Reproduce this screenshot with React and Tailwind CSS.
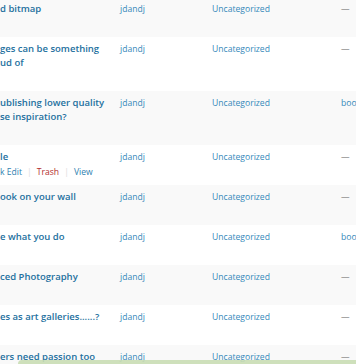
const rows = [
  { title: ['d bitmap'], tags: '—' },
  { title: ['ges can be something', 'ud of'], tags: '—' },
  { title: ['ublishing lower quality', 'se inspiration?'], tags: 'boo' },
  { title: ['le'], tags: '—', actions: true },
  { title: ['ook on your wall'], tags: '—' },
  { title: ['e what you do'], tags: 'boo' },
  { title: ['ced Photography'], tags: '—' },
  { title: ['es as art galleries......?'], tags: '—' },
  { title: ['ers need passion too'], tags: '—' },
];

function PostRow({ row, index }) {
  const striped = index % 2 === 0;
  return (
    <div className={`flex py-[5px] ${striped ? 'bg-[#f9f9f9]' : 'bg-white'}`}>
      <div className="w-[120px] shrink-0 pr-[10px]">
        {row.title.map((line) => (
          <div key={line} className="whitespace-nowrap text-[9.5px] font-semibold leading-[14px] text-[#23709e]">
            {line}
          </div>
        ))}
        <div className="flex h-[16px] items-center whitespace-nowrap text-[8.6px] leading-[16px]">
          {row.actions && (
            <>
              <span className="text-[#2f7fb0]">k Edit</span>
              <span className="mx-[5px] text-[#dddddd]">|</span>
              <span className="text-[#b32d2e]">Trash</span>
              <span className="mx-[5px] text-[#dddddd]">|</span>
              <span className="text-[#2f7fb0]">View</span>
            </>
          )}
        </div>
      </div>
      <div className="w-[92px] shrink-0 text-[8.6px] leading-[14px] text-[#3589ba]">jdandj</div>
      <div className="w-[129px] shrink-0 text-[8.6px] leading-[14px] text-[#3589ba]">Uncategorized</div>
      <div className={`flex-1 whitespace-nowrap text-[8.6px] leading-[14px] ${row.tags === '—' ? 'text-[#888888]' : 'text-[#3589ba]'}`}>
        {row.tags}
      </div>
    </div>
  );
}

export default function App() {
  return (
    <div className="relative h-[364px] w-[356px] overflow-hidden bg-white font-['Open_Sans',sans-serif]">
      <div className="-mt-[3px]">
        {rows.map((row, i) => (
          <PostRow key={i} row={row} index={i} />
        ))}
      </div>
      <div className="absolute bottom-0 left-[18px] right-0 top-[360px] rounded-tl-[12px] bg-[#c9ddb4] opacity-90" />
    </div>
  );
}
